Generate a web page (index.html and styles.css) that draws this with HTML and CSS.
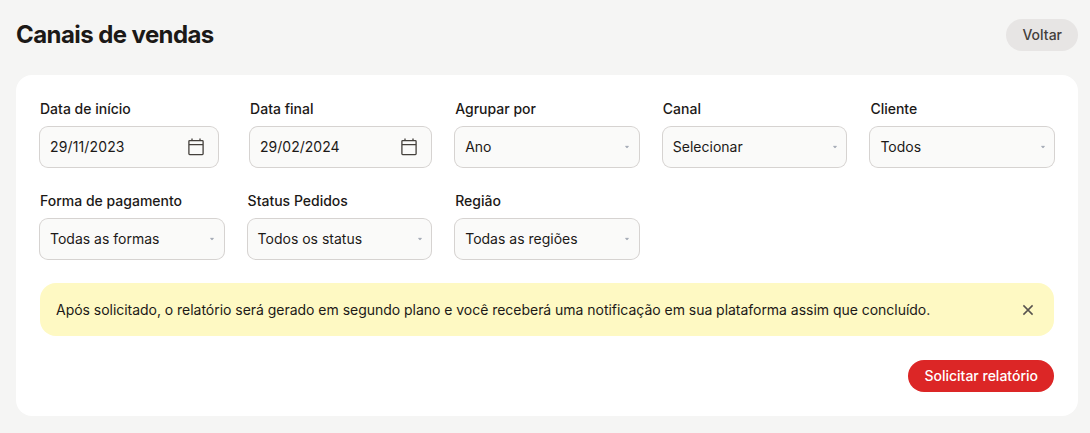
FILE: index.html
```html
<!DOCTYPE html>
<html lang="pt-BR">
<head>
<meta charset="utf-8">
<title>Canais de vendas</title>
<link rel="stylesheet" href="styles.css">
</head>
<body>
<header class="page-header">
  <h1 class="title">Canais de vendas</h1>
  <button class="btn btn-muted" type="button">Voltar</button>
</header>
<main class="card">
  <form class="filters">
    <div class="date-range">
      <div class="field"><span class="label">Data de início</span>
        <div class="control date date-start"><span>29/11/2023</span>
          <svg class="calendar" width="16" height="18" viewBox="0 0 16 18" fill="none" stroke="currentColor" stroke-width="1.3"><rect x=".9" y="2.6" width="14.2" height="14" rx=".8"/><path d="M1 6.6h14M4 .6v2M12 .6v2"/></svg></div></div>
      <div class="field"><span class="label">Data final</span>
        <div class="control date"><span>29/02/2024</span>
          <svg class="calendar" width="16" height="18" viewBox="0 0 16 18" fill="none" stroke="currentColor" stroke-width="1.3"><rect x=".9" y="2.6" width="14.2" height="14" rx=".8"/><path d="M1 6.6h14M4 .6v2M12 .6v2"/></svg></div></div>
    </div>
    <div class="field"><span class="label">Agrupar por</span>
      <div class="control"><span>Ano</span><svg class="caret" width="4" height="4" viewBox="0 0 4 4"><path d="M.6 1l1.4 1.4L3.4 1"/></svg></div></div>
    <div class="field"><span class="label">Canal</span>
      <div class="control"><span>Selecionar</span><svg class="caret" width="4" height="4" viewBox="0 0 4 4"><path d="M.6 1l1.4 1.4L3.4 1"/></svg></div></div>
    <div class="field"><span class="label">Cliente</span>
      <div class="control"><span>Todos</span><svg class="caret" width="4" height="4" viewBox="0 0 4 4"><path d="M.6 1l1.4 1.4L3.4 1"/></svg></div></div>
    <div class="field"><span class="label">Forma de pagamento</span>
      <div class="control"><span>Todas as formas</span><svg class="caret" width="4" height="4" viewBox="0 0 4 4"><path d="M.6 1l1.4 1.4L3.4 1"/></svg></div></div>
    <div class="field"><span class="label">Status Pedidos</span>
      <div class="control"><span>Todos os status</span><svg class="caret" width="4" height="4" viewBox="0 0 4 4"><path d="M.6 1l1.4 1.4L3.4 1"/></svg></div></div>
    <div class="field"><span class="label">Região</span>
      <div class="control"><span>Todas as regiões</span><svg class="caret" width="4" height="4" viewBox="0 0 4 4"><path d="M.6 1l1.4 1.4L3.4 1"/></svg></div></div>
  </form>
  <div class="notice">
    <span class="notice-text">Após solicitado, o relatório será gerado em segundo plano e você receberá uma notificação em sua plataforma assim que concluído.</span>
    <svg class="close" width="20" height="20" viewBox="0 0 20 20" fill="none" stroke="currentColor" stroke-width="1.5"><path d="M5.4 5.4l9.2 9.2M14.6 5.4l-9.2 9.2"/></svg>
  </div>
  <div class="actions"><button class="btn btn-primary" type="button">Solicitar relatório</button></div>
</main>
</body>
</html>
```
FILE: styles.css
```css
* { box-sizing: border-box; }
body {
  margin: 0;
  padding: 19px 12px 17px 16px;
  background: #f5f5f4;
  color: #1c1917;
  font: 400 14px/20px Inter, "Liberation Sans", sans-serif;
}
.page-header { display: flex; align-items: center; justify-content: space-between; height: 32px; }
.title { margin: 0; font-size: 24px; line-height: 32px; font-weight: 700; letter-spacing: -0.58px; }
.btn { height: 32px; padding: 0 16px; border: 0; border-radius: 16px; font: inherit; font-weight: 500; }
.btn-muted { background: #e7e5e4; color: #44403c; }
.btn-primary { background: #dc2626; color: #fff; }
.card { margin-top: 24px; height: 341px; padding: 24px; border-radius: 16px; background: #fff; }
.filters { display: grid; grid-template-columns: repeat(5, 1fr); gap: 24px; }
.date-range { grid-column: span 2; display: grid; grid-template-columns: 178fr 181fr; gap: 32px; }
.label { display: block; margin-bottom: 8px; font-weight: 500; }
.control {
  display: flex;
  align-items: center;
  justify-content: space-between;
  height: 40px;
  padding: 0 9.5px 0 10px;
  border-radius: 8px;
  background: #fafaf9;
  box-shadow: 0 0 0 1px #d6d3d1;
}
.date { padding-right: 14px; }
.date-start { letter-spacing: 0.14px; }
.calendar { color: #44403c; }
.caret { fill: none; stroke: #9ca3af; stroke-width: 1.2; }
.notice {
  display: flex;
  align-items: center;
  justify-content: space-between;
  height: 53px;
  margin-top: 24px;
  padding: 0 16px;
  border-radius: 16px;
  background: #fef9c3;
}
.notice-text { letter-spacing: -0.03px; }
.close { color: #57534e; }
.actions { display: flex; justify-content: flex-end; margin-top: 24px; }
```
